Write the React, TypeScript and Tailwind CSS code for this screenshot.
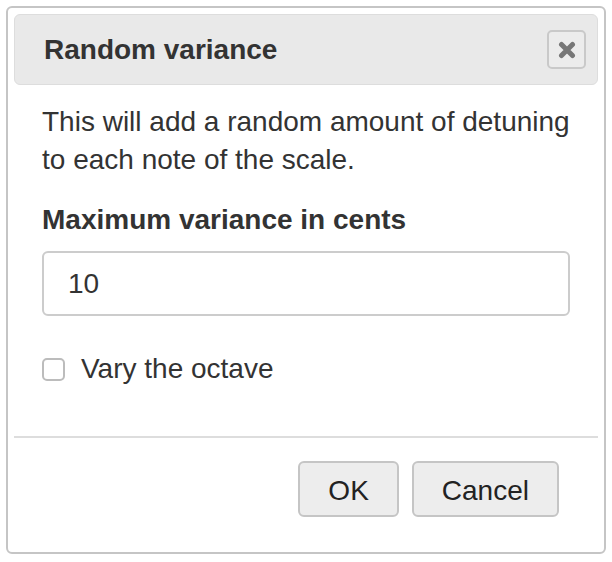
export default function App() {
  return (
    <div className="min-h-[562px] w-[612px] bg-white pt-[6px] pl-[6px] font-['Liberation_Sans',Arial,sans-serif] text-[#333333]">
      <div className="flex h-[548px] w-[600px] flex-col rounded-[6px] border-2 border-[#c5c5c5] bg-white p-[6px]">
        <div className="flex h-[71px] items-center justify-between rounded-[6px] border border-[#dddddd] bg-[#e9e9e9] pl-[29px] pr-[11px]">
          <span className="text-[28px] font-bold leading-none">Random variance</span>
          <button className="flex h-[39px] w-[39px] items-center justify-center rounded-[5px] border-2 border-[#c9c9c9] bg-[#ececec]">
            <svg width="20" height="18" viewBox="0 0 20 18">
              <path d="M4.5 3.5 L15.5 14.5 M15.5 3.5 L4.5 14.5" stroke="#777777" strokeWidth="5" strokeLinecap="round" />
            </svg>
          </button>
        </div>

        <div className="px-[28px] pt-[18px]">
          <p className="mr-[-8px] text-[28px] leading-[38px]">
            This will add a random amount of detuning to each note of the scale.
          </p>
          <label className="mt-[22px] block text-[28px] font-bold leading-[38px]">
            Maximum variance in cents
          </label>
          <input
            defaultValue="10"
            className="mt-[12px] block h-[65px] w-full rounded-[6px] border-2 border-[#cccccc] px-[24px] text-[28px] text-[#333333] outline-none"
          />
          <label className="mt-[34px] flex h-[38px] items-center gap-[16px] text-[28px]">
            <span className="block h-[23px] w-[23px] rounded-[5px] border-2 border-[#bcbcbc] bg-white" />
            Vary the octave
          </label>
        </div>

        <div className="mt-[48px] h-[2px] bg-[#dddddd]" />

        <div className="flex justify-end gap-[13px] pr-[39px] pt-[23px]">
          <button className="h-[56px] rounded-[6px] border-2 border-[#c5c5c5] bg-[#ededed] px-[28px] pt-[3px] text-[28px] text-[#222222]">
            OK
          </button>
          <button className="h-[56px] rounded-[6px] border-2 border-[#c5c5c5] bg-[#ededed] px-[28px] pt-[3px] text-[28px] text-[#222222]">
            Cancel
          </button>
        </div>
      </div>
    </div>
  );
}
